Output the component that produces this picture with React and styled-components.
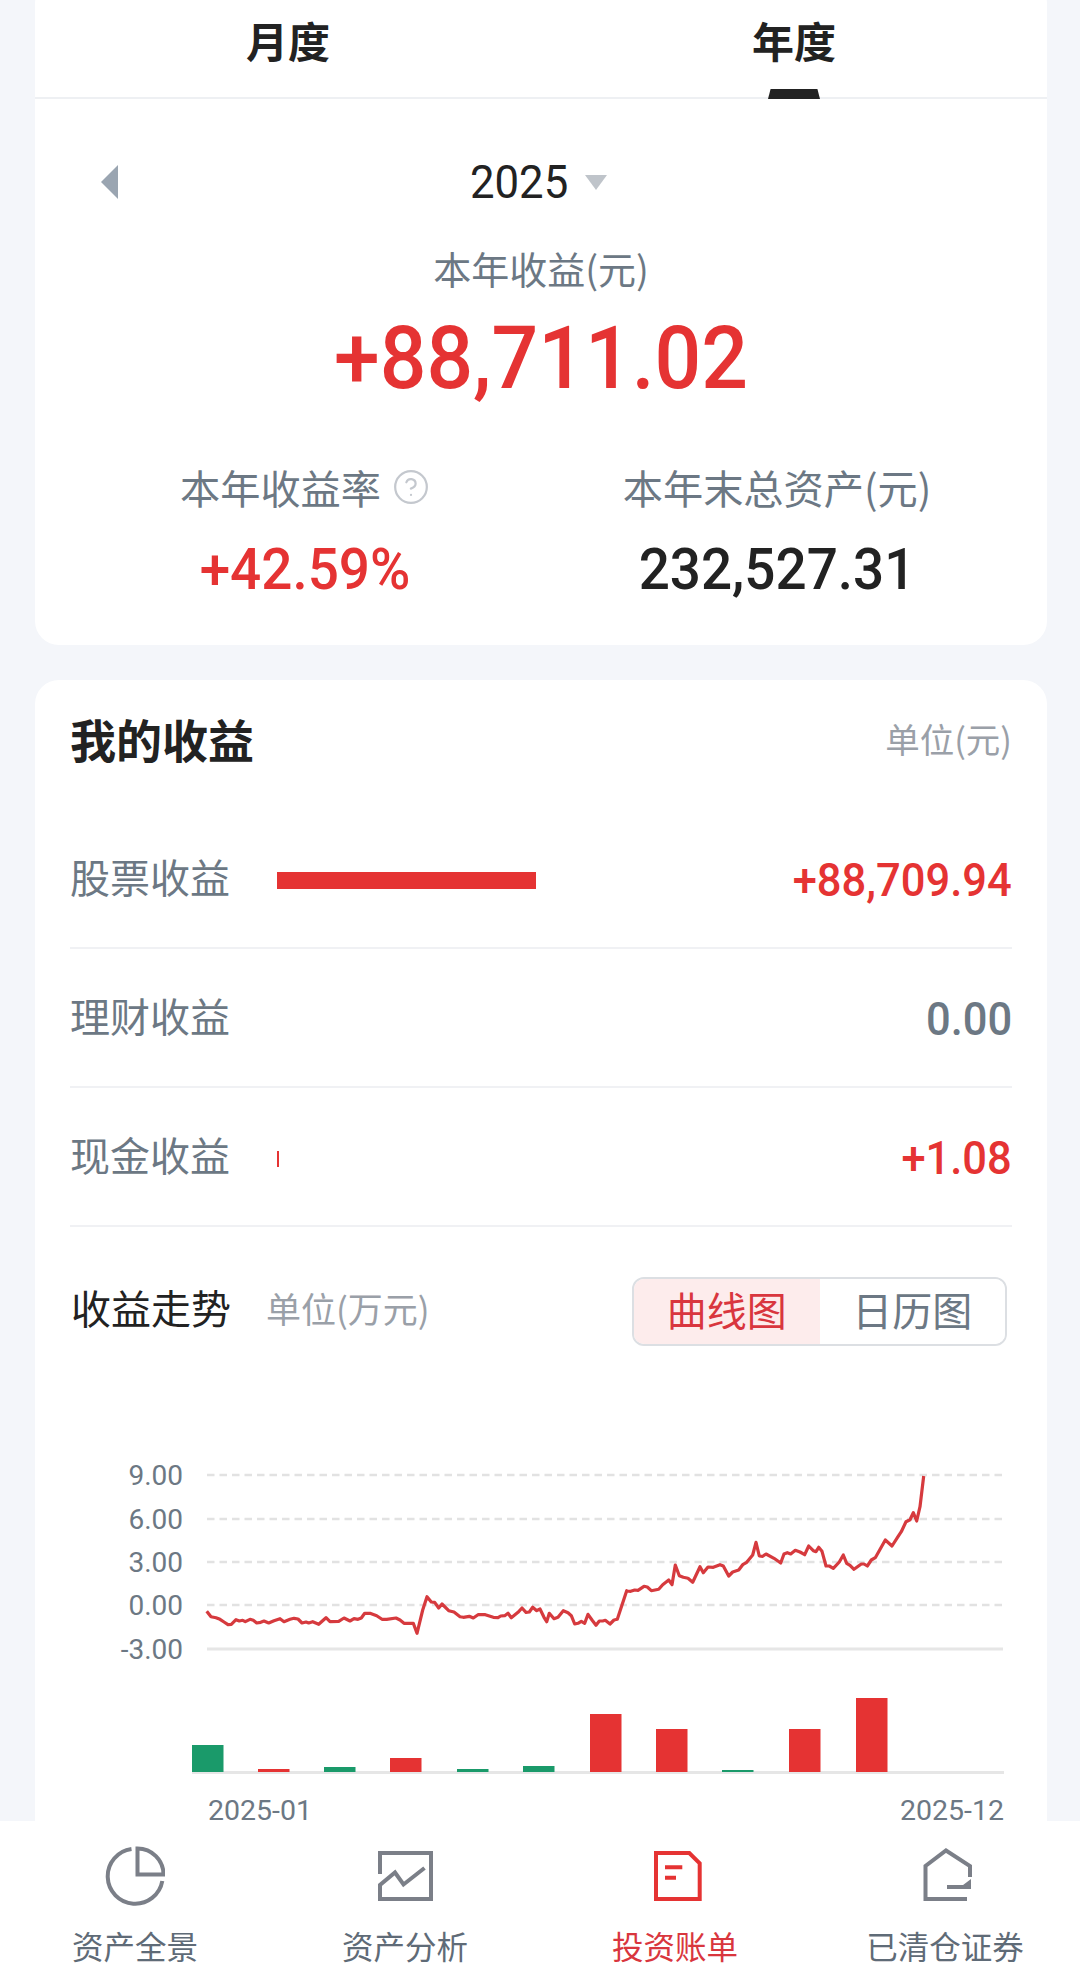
import React from "react";
import styled, { createGlobalStyle } from "styled-components";

const CJK = `"Noto Sans CJK SC", "Roboto", sans-serif`;
const NUM = `"Roboto", "Noto Sans CJK SC", sans-serif`;
const RED = "#e53333";
const GREEN = "#1a9a6a";
const GRAY = "#6c7884";

const Global = createGlobalStyle`
  html, body { margin: 0; padding: 0; background: #f4f6fa; }
  * { box-sizing: border-box; }
`;

const Page = styled.div`
  position: relative;
  width: 1080px;
  height: 1987px;
  overflow: hidden;
  background: #f4f6fa;
  font-family: ${CJK};
`;

const Card = styled.section`
  margin: ${(p) => p.$margin};
  background: #fff;
  border-radius: 24px;
  padding: ${(p) => p.$padding || 0};
`;

const Tabs = styled.div`
  display: grid;
  grid-template-columns: 1fr 1fr;
  height: 119px;
  border-bottom: 2px solid #eef0f3;
`;

const Tab = styled.div`
  position: relative;
  padding-top: 30px;
  text-align: center;
  font-size: 42px;
  line-height: 60px;
  font-weight: 700;
  color: #222;
`;

const Indicator = styled.span`
  position: absolute;
  left: 50%;
  bottom: -2px;
  width: 52px;
  height: 10px;
  margin-left: -26px;
  background: #222;
  clip-path: polygon(5% 0, 95% 0, 100% 100%, 0 100%);
`;

const YearRow = styled.div`
  display: grid;
  grid-template-columns: 1fr auto 1fr;
  align-items: center;
  height: 60px;
  margin-top: 53px;
  padding-left: 66px;
`;

const PrevArrow = styled.span`
  width: 0;
  height: 0;
  border-style: solid;
  border-width: 17px 17px 17px 0;
  border-color: transparent #9aa5b1 transparent transparent;
`;

const Year = styled.div`
  display: flex;
  align-items: center;
  gap: 18px;
  margin-left: -72px;
  font-family: ${NUM};
  font-size: 46px;
  color: #222;
`;

const YearNum = styled.span`
  display: inline-block;
  width: 97px;
  transform: scaleX(0.95);
  transform-origin: left center;
`;

const DropCaret = styled.span`
  width: 0;
  height: 0;
  border-style: solid;
  border-width: 15px 11.5px 0 11.5px;
  border-color: #bfc4ca transparent transparent transparent;
`;

const HeroLabel = styled.div`
  margin-top: 31px;
  text-align: center;
  font-size: 38px;
  line-height: 50px;
  color: ${GRAY};
`;

const HeroAmount = styled.div`
  margin-top: 15px;
  text-align: center;
  font-family: ${NUM};
  font-size: 87px;
  line-height: 100px;
  font-weight: 500;
  color: ${RED};
  transform: scaleX(0.945);
`;

const Stats = styled.div`
  display: grid;
  grid-template-columns: 1fr 1fr;
  margin-top: 54px;
  padding: 0 34px 41px;
`;

const Stat = styled.div`
  text-align: center;
`;

const StatLabel = styled.div`
  display: flex;
  justify-content: center;
  align-items: center;
  gap: 11px;
  font-size: 40.2px;
  line-height: 50px;
  color: ${GRAY};
`;

const StatValue = styled.div`
  margin-top: 22px;
  font-family: ${NUM};
  font-size: 58px;
  line-height: 70px;
  font-weight: 500;
  color: ${(p) => p.$color};
  transform: scaleX(0.945);
`;

const SectionHead = styled.div`
  display: flex;
  justify-content: space-between;
  align-items: center;
  height: 60px;
`;

const SectionTitle = styled.h2`
  margin: 0;
  font-size: 46px;
  font-weight: 700;
  color: #222;
`;

const Unit = styled.span`
  font-size: 34.5px;
  color: #9aa0a8;
`;

const Rows = styled.div`
  margin-top: 42px;
`;

const Row = styled.div`
  display: flex;
  align-items: center;
  height: 139px;
  border-bottom: 2px solid #f0f1f4;
`;

const RowLabel = styled.div`
  width: 207px;
  margin-bottom: 5px;
  font-size: 40px;
  color: ${GRAY};
`;

const RowBar = styled.div`
  width: ${(p) => p.$w}px;
  height: ${(p) => p.$h}px;
  margin-top: 4px;
  background: ${RED};
`;

const RowValue = styled.div`
  margin-left: auto;
  margin-top: 3px;
  font-family: ${NUM};
  font-size: 46px;
  font-weight: 500;
  color: ${(p) => p.$color};
  transform: scaleX(0.945);
  transform-origin: right center;
`;

const TrendHead = styled.div`
  display: flex;
  align-items: center;
  padding: 50px 5px 0 1px;
`;

const TrendTitle = styled.div`
  margin-bottom: 9px;
  font-size: 40px;
  color: #222;
`;

const TrendUnit = styled.div`
  margin-left: 35px;
  margin-bottom: 9px;
  font-size: 35px;
  color: #9aa0a8;
`;

const Segment = styled.div`
  display: flex;
  margin-left: auto;
  width: 375px;
  height: 69px;
  border: 2px solid #dcdfe3;
  border-radius: 12px;
  overflow: hidden;
`;

const SegmentItem = styled.div`
  flex: 1;
  display: flex;
  align-items: center;
  justify-content: center;
  padding-bottom: 5px;
  font-size: 40px;
  color: ${(p) => (p.$active ? "#d9363e" : GRAY)};
  background: ${(p) => (p.$active ? "#fdecec" : "#fff")};
`;

const ChartSvg = styled.svg`
  display: block;
  width: 942px;
  height: 540px;
`;

const AxisText = styled.text`
  font-family: ${NUM};
  font-size: ${(p) => p.$size || 28}px;
  fill: ${GRAY};
`;

const TabBar = styled.nav`
  position: absolute;
  left: 0;
  right: 0;
  bottom: 0;
  display: grid;
  grid-template-columns: repeat(4, 1fr);
  height: 166px;
  background: #fff;
`;

const TabItem = styled.div`
  display: flex;
  flex-direction: column;
  align-items: center;
  padding-top: 25px;
  color: ${(p) => (p.$active ? "#d9363e" : "#5f6b77")};
`;

const TabLabel = styled.div`
  margin-top: 17px;
  font-size: 31.5px;
  line-height: 44px;
`;

const IconSvg = styled.svg`
  display: block;
  width: 60px;
  height: 60px;
  fill: none;
  stroke: ${(p) => p.$color || "#7b7f88"};
  stroke-width: 4;
`;

const seg = (x0, y0, pts) => pts.map(([x, y]) => [x0 + x / 3, y0 + y / 3]);

const LINE = [
  ...seg(200, 1570, [[20,124],[33,140],[48,143],[60,148],[72,156],[84,164],[94,163],[108,149],[118,153],[128,151],[136,155],[150,148],[160,151],[170,159],[182,157],[192,153],[206,159],[222,152],[240,146],[252,155],[270,148],[282,145],[294,147],[306,159],[318,156],[326,159],[338,155],[356,163],[378,143],[390,155],[416,154],[432,144],[450,153],[462,146],[474,148],[484,144],[494,130],[510,130],[530,137],[546,148],[560,148],[588,144],[600,150],[612,160],[640,160]]),
  ...seg(410, 1570, [[21,190],[38,120],[51,80],[64,96],[74,97],[86,114],[96,102],[116,122],[132,126],[150,140],[160,142],[178,139],[190,144],[204,134],[226,134],[250,142],[264,143],[272,138],[284,137],[294,130],[304,143],[324,127],[336,114],[348,127],[358,126],[368,112],[380,122],[390,117],[402,142],[410,155],[418,130],[432,146],[444,142],[460,122],[474,128],[484,137],[494,162],[504,160],[514,154],[524,160],[534,133],[546,150],[558,166],[568,153],[578,153],[586,151],[600,162],[612,150],[622,148],[650,62]]),
  ...seg(620, 1520, [[20,213],[32,214],[44,210],[54,211],[72,199],[82,201],[94,212],[116,208],[128,194],[146,180],[156,194],[166,135],[178,167],[190,172],[204,175],[218,187],[240,140],[250,158],[264,141],[280,142],[300,134],[310,138],[326,168],[338,156],[356,150],[368,134],[380,127],[398,105],[408,67],[418,108],[428,109],[438,102],[462,115],[482,129],[492,102],[502,98],[512,102],[526,91],[540,96]]),
  ...seg(800, 1470, [[14,254],[26,228],[40,242],[48,245],[56,232],[66,244],[78,288],[88,288],[100,295],[118,276],[130,255],[140,280],[150,286],[162,298],[184,282],[192,282],[202,288],[214,270],[226,263],[256,210],[276,228],[294,200],[304,185],[318,155],[330,149],[340,128],[350,153],[360,110],[371,18]]),
].map(([x, y]) => `${x.toFixed(1)},${y.toFixed(1)}`).join(" ");

const GRID = [
  { y: 1475, label: "9.00" },
  { y: 1519, label: "6.00" },
  { y: 1562, label: "3.00" },
  { y: 1605, label: "0.00" },
  { y: 1649, label: "-3.00" },
];

const BARS = [
  { x: 192, top: 1745, c: GREEN },
  { x: 258, top: 1769, c: RED },
  { x: 324, top: 1767, c: GREEN },
  { x: 390, top: 1758, c: RED },
  { x: 457, top: 1769, c: GREEN },
  { x: 523, top: 1766, c: GREEN },
  { x: 590, top: 1714, c: RED },
  { x: 656, top: 1729, c: RED },
  { x: 722, top: 1770, c: GREEN },
  { x: 789, top: 1729, c: RED },
  { x: 856, top: 1698, c: RED },
];

function Chart() {
  return (
    <ChartSvg viewBox="70 1346 942 540">
      {GRID.map((g, i) => (
        <g key={g.y}>
          <line
            x1="207"
            x2="1003"
            y1={g.y}
            y2={g.y}
            stroke={i === 4 ? "#e6e6e6" : "#e2e2e2"}
            strokeWidth={i === 4 ? 3 : 2.5}
            strokeDasharray={i === 4 ? undefined : "7.5 5"}
          />
          <AxisText x="183" y={g.y + 10} textAnchor="end">{g.label}</AxisText>
        </g>
      ))}
      <polyline points={LINE} fill="none" stroke="#d63a3e" strokeWidth="3.2" strokeLinejoin="round" />
      <line x1="192" x2="1004" y1="1772.5" y2="1772.5" stroke="#e6e6e6" strokeWidth="3" />
      {BARS.map((b) => (
        <rect key={b.x} x={b.x} y={b.top} width="31.5" height={1772 - b.top} fill={b.c} />
      ))}
      <AxisText x="208" y="1820" $size={28.5}>2025-01</AxisText>
      <AxisText x="1004" y="1820" $size={28.5} textAnchor="end">2025-12</AxisText>
    </ChartSvg>
  );
}

const HelpIcon = () => (
  <svg width="38" height="38" viewBox="0 0 24 24" fill="none" stroke="#c4c8ce" strokeWidth="1.4" strokeLinecap="round">
    <circle cx="12" cy="12" r="10" />
    <path d="M9.09 9a3 3 0 0 1 5.83 1c0 2-3 3-3 3" />
    <path d="M12 17h.01" />
  </svg>
);

const PieIcon = () => (
  <IconSvg viewBox="0 0 60 60">
    <path d="M26.5 3A27.5 27.5 0 1 0 57.3 35" />
    <path d="M32.5 2.5V28.5H58.5A26 26 0 0 0 32.5 2.5Z" />
  </IconSvg>
);

const TrendIcon = () => (
  <IconSvg viewBox="0 0 60 60">
    <path d="M5 28V7H56V53H5V39L20 26.5 28.5 38.5 49.5 22" />
  </IconSvg>
);

const BillIcon = () => (
  <IconSvg viewBox="0 0 60 60" $color={RED}>
    <path d="M11 7H44.3L54.7 17.3V53H11Z" />
    <path d="M20 21.3H37.3M20 31.7H31" />
  </IconSvg>
);

const HouseIcon = () => (
  <IconSvg viewBox="0 0 60 60">
    <path d="M52 53H10.5V20L31 4.5 55 20V31" />
    <path d="M32 41H56" />
    <path d="M47 41L55 35V41Z" fill="#7b7f88" strokeWidth="2" />
  </IconSvg>
);

export default function App() {
  return (
    <Page>
      <Global />
      <Card $margin="-20px 33px 0 35px">
        <Tabs>
          <Tab>月度</Tab>
          <Tab>
            年度
            <Indicator />
          </Tab>
        </Tabs>
        <YearRow>
          <PrevArrow />
          <Year>
            <YearNum>2025</YearNum>
            <DropCaret />
          </Year>
        </YearRow>
        <HeroLabel>本年收益(元)</HeroLabel>
        <HeroAmount>+88,711.02</HeroAmount>
        <Stats>
          <Stat>
            <StatLabel>
              本年收益率
              <HelpIcon />
            </StatLabel>
            <StatValue $color={RED}>+42.59%</StatValue>
          </Stat>
          <Stat>
            <StatLabel>本年末总资产(元)</StatLabel>
            <StatValue $color="#222">232,527.31</StatValue>
          </Stat>
        </Stats>
      </Card>

      <Card $margin="35px 33px 0 35px" $padding="28px 35px 0">
        <SectionHead>
          <SectionTitle>我的收益</SectionTitle>
          <Unit>单位(元)</Unit>
        </SectionHead>
        <Rows>
          <Row>
            <RowLabel>股票收益</RowLabel>
            <RowBar $w={259} $h={17} />
            <RowValue $color={RED}>+88,709.94</RowValue>
          </Row>
          <Row>
            <RowLabel>理财收益</RowLabel>
            <RowValue $color={GRAY}>0.00</RowValue>
          </Row>
          <Row>
            <RowLabel>现金收益</RowLabel>
            <RowBar $w={2} $h={16} />
            <RowValue $color={RED}>+1.08</RowValue>
          </Row>
        </Rows>
        <TrendHead>
          <TrendTitle>收益走势</TrendTitle>
          <TrendUnit>单位(万元)</TrendUnit>
          <Segment>
            <SegmentItem $active>曲线图</SegmentItem>
            <SegmentItem>日历图</SegmentItem>
          </Segment>
        </TrendHead>
        <Chart />
      </Card>

      <TabBar>
        <TabItem>
          <PieIcon />
          <TabLabel>资产全景</TabLabel>
        </TabItem>
        <TabItem>
          <TrendIcon />
          <TabLabel>资产分析</TabLabel>
        </TabItem>
        <TabItem $active>
          <BillIcon />
          <TabLabel>投资账单</TabLabel>
        </TabItem>
        <TabItem>
          <HouseIcon />
          <TabLabel>已清仓证券</TabLabel>
        </TabItem>
      </TabBar>
    </Page>
  );
}
